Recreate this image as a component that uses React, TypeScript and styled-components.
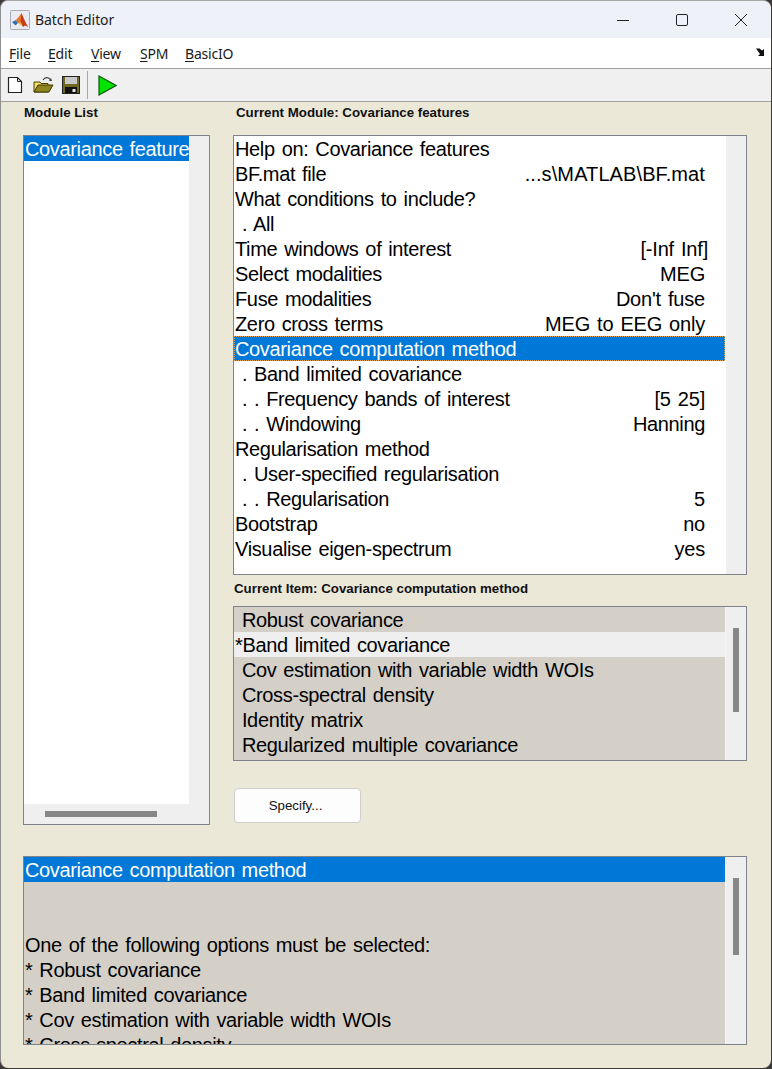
import React from "react"
import styled, { createGlobalStyle } from "styled-components"

const GlobalStyle = createGlobalStyle`
  html, body {
    margin: 0;
    padding: 0;
    background: #3b3a38;
  }
`

const Page = styled.div`
  width: 772px;
  height: 1069px;
  overflow: hidden;
`

const Window = styled.div`
  box-sizing: border-box;
  width: 771px;
  height: 1068px;
  display: flex;
  flex-direction: column;
  background: #ebe8d8;
  border-top: 1px solid #a9a9a9;
  border-left: 1px solid #8f8f8f;
  border-radius: 8px;
  overflow: hidden;
`

const TitleBar = styled.div`
  height: 37px;
  display: flex;
  align-items: center;
  background: #eff1f8;
  flex-shrink: 0;
`

const AppIcon = styled.svg`
  width: 20px;
  height: 20px;
  margin-left: 9px;
`

const Title = styled.span`
  margin-left: 5px;
  flex: 1;
  font: 14px "Noto Sans", sans-serif;
  letter-spacing: -0.1px;
  color: #1c1c1c;
`

const WindowButton = styled.svg`
  width: 14px;
  height: 14px;
  margin-right: 45px;
  &:last-child {
    margin-right: 23px;
  }
`

const MenuBar = styled.div`
  height: 30px;
  display: flex;
  align-items: center;
  padding-left: 8px;
  background: #fff;
  border-bottom: 1px solid #a0a0a0;
  flex-shrink: 0;
`

const MenuItem = styled.span<{ $width: number }>`
  width: ${p => p.$width}px;
  font: 14px "Noto Sans", sans-serif;
  letter-spacing: -0.2px;
  color: #1a1a1a;
  u {
    text-underline-offset: 2px;
  }
`

const MenuArrow = styled.svg`
  width: 10px;
  height: 8px;
  margin-left: auto;
  margin-right: 5px;
  margin-top: -2px;
`

const Toolbar = styled.div`
  height: 32px;
  display: flex;
  align-items: center;
  padding-left: 6px;
  background: #f0f0f0;
  border-bottom: 1px solid #a0a0a0;
  flex-shrink: 0;
`

const ToolIcon = styled.svg<{ $left: number }>`
  margin-left: ${p => p.$left}px;
  flex-shrink: 0;
`

const ToolSeparator = styled.div`
  width: 1px;
  height: 28px;
  margin-left: 7px;
  background: #a8a8a8;
`

const Content = styled.div`
  display: grid;
  grid-template-columns: 187px 514px;
  column-gap: 23px;
  row-gap: 31px;
  padding-left: 22px;
`

const Column = styled.div`
  display: flex;
  flex-direction: column;
`

const Label = styled.div<{ $height: number; $left: number; $top: number }>`
  box-sizing: border-box;
  height: ${p => p.$height}px;
  padding: ${p => p.$top}px 0 0 ${p => p.$left}px;
  font: bold 13.3px/20px "Liberation Sans", Arial, sans-serif;
  color: #111;
  white-space: nowrap;
`

const Panel = styled.div<{ $height: number }>`
  box-sizing: border-box;
  height: ${p => p.$height}px;
  display: flex;
  border: 1px solid #7f838c;
  background: #efefef;
  overflow: hidden;
`

const LeftPanel = styled(Panel)`
  flex-direction: column;
`

const LeftBody = styled.div`
  flex: 1;
  min-height: 0;
  display: flex;
`

const Rows = styled.div<{ $muted?: boolean }>`
  flex: 1;
  min-width: 0;
  overflow: hidden;
  background: ${p => (p.$muted ? "#d4d0c8" : "#fff")};
  border-right: 1px solid ${p => (p.$muted ? "#f6f6f6" : "#fff")};
  font: 20px/25px "Liberation Sans", Arial, sans-serif;
  letter-spacing: -0.35px;
  word-spacing: 1.7px;
  color: #000;
`

const LeftRows = styled(Rows)`
  border-right: none;
`

const Row = styled.div<{ $selected?: boolean; $focused?: boolean; $light?: boolean }>`
  box-sizing: border-box;
  height: 25px;
  padding: 1px 0 0 1px;
  display: flex;
  justify-content: space-between;
  white-space: pre;
  overflow: hidden;
  background: ${p => (p.$selected ? "#0078d7" : p.$light ? "#efefef" : "transparent")};
  color: ${p => (p.$selected ? "#fff" : "#000")};
  outline: ${p => (p.$focused ? "1px dotted #e0a050" : "none")};
  outline-offset: -1px;
`

const Value = styled.span<{ $inset?: number; $tracking?: number }>`
  padding-right: ${p => p.$inset ?? 20}px;
  letter-spacing: ${p => p.$tracking ?? -0.2}px;
`

const VerticalTrack = styled.div<{ $top?: number }>`
  width: 20px;
  flex-shrink: 0;
  box-sizing: border-box;
  padding: ${p => p.$top ?? 0}px 7px 0 7px;
`

const VerticalThumb = styled.div<{ $height: number }>`
  width: 6px;
  height: ${p => p.$height}px;
  background: #878787;
`

const HorizontalTrack = styled.div`
  height: 20px;
  flex-shrink: 0;
  box-sizing: border-box;
  padding: 7px 0 0 21px;
`

const HorizontalThumb = styled.div`
  width: 112px;
  height: 6px;
  background: #878787;
`

const SpecifyButton = styled.button`
  box-sizing: border-box;
  width: 127px;
  height: 35px;
  margin: 27px 0 0 1px;
  padding: 0 4px 0 0;
  background: #fdfdfd;
  border: 1px solid #cfcfcf;
  border-radius: 4px;
  font: 13.3px "Liberation Sans", Arial, sans-serif;
  color: #111;
`

const HelpPanel = styled(Panel)`
  grid-column: 1 / span 2;
`

const parameters: [string, string?, number?, number?][] = [
  ["Help on: Covariance features"],
  ["BF.mat file", "...s\\MATLAB\\BF.mat", 20, 0.1],
  ["What conditions to include?"],
  [" . All"],
  ["Time windows of interest", "[-Inf Inf]", 17],
  ["Select modalities", "MEG"],
  ["Fuse modalities", "Don't fuse"],
  ["Zero cross terms", "MEG to EEG only"],
  ["Covariance computation method"],
  [" . Band limited covariance"],
  [" . . Frequency bands of interest", "[5 25]", 20],
  [" . . Windowing", "Hanning", 20, -0.35],
  ["Regularisation method"],
  [" . User-specified regularisation"],
  [" . . Regularisation", "5"],
  ["Bootstrap", "no"],
  ["Visualise eigen-spectrum", "yes"]
]

const methods = [
  " Robust covariance",
  "*Band limited covariance",
  " Cov estimation with variable width WOIs",
  " Cross-spectral density",
  " Identity matrix",
  " Regularized multiple covariance"
]

const helpLines = [
  "",
  "",
  "One of the following options must be selected:",
  "* Robust covariance",
  "* Band limited covariance",
  "* Cov estimation with variable width WOIs",
  "* Cross-spectral density"
]

const menus: [string, string, number][] = [
  ["F", "ile", 39],
  ["E", "dit", 43],
  ["V", "iew", 49],
  ["S", "PM", 45],
  ["B", "asicIO", 60]
]

const MatlabIcon = () => (
  <AppIcon viewBox="0 0 20 20">
    <rect x="0.5" y="0.5" width="19" height="19" rx="1" fill="#e9ebf0" stroke="#a9abb0" />
    <path d="M2 12l4-2 2 3-2.500 2.500z" fill="#2f6fb5" />
    <path d="M6 10l3-3.500L11.500 3l2 9-3 1-2.500 0z" fill="#e8772a" />
    <path d="M11.500 3l2.500 6 4 8-3-1.500-2 1.500-2.500-5z" fill="#c63d1d" />
    <path d="M8 13l2.500-1 2 4.500z" fill="#f4b43a" />
  </AppIcon>
)

const App: React.FC = () => (
  <Page>
    <GlobalStyle />
    <Window>
      <TitleBar>
        <MatlabIcon />
        <Title>Batch Editor</Title>
        <WindowButton viewBox="0 0 14 14">
          <path d="M1 7.500h12" stroke="#222" strokeWidth="1" />
        </WindowButton>
        <WindowButton viewBox="0 0 14 14">
          <rect x="1.500" y="1.500" width="11" height="11" rx="1.500" fill="none" stroke="#222" />
        </WindowButton>
        <WindowButton viewBox="0 0 14 14">
          <path d="M1 1l12 12M13 1L1 13" stroke="#222" strokeWidth="1" />
        </WindowButton>
      </TitleBar>

      <MenuBar>
        {menus.map(([key, rest, width]) => (
          <MenuItem key={key} $width={width}>
            <u>{key}</u>
            {rest}
          </MenuItem>
        ))}
        <MenuArrow viewBox="0 0 10 8">
          <path d="M0 0.500h3.500l2.500 2 2-1.500v7H2l2-2z" fill="#111" />
        </MenuArrow>
      </MenuBar>

      <Toolbar>
        <ToolIcon $left={0} width="16" height="18" viewBox="0 0 16 18">
          <path d="M1.500 1.500h9l4 4v11h-13z" fill="#fff" stroke="#222" strokeWidth="1.200" />
          <path d="M10.500 1.500v4h4" fill="none" stroke="#222" />
        </ToolIcon>
        <ToolIcon $left={10} width="21" height="18" viewBox="0 0 21 18">
          <path d="M1 6h6l1 1.500h7V16H1z" fill="#f2dc6a" stroke="#4a4200" />
          <path d="M1 16l4-7h15l-4 7z" fill="#8f8420" stroke="#3d3800" />
          <path d="M10 4c2-3 5-3 7-1l1 2" fill="none" stroke="#444" strokeWidth="1.200" />
          <path d="M16 5l3 0-1-3z" fill="#444" />
        </ToolIcon>
        <ToolIcon $left={8} width="18" height="18" viewBox="0 0 18 18">
          <rect x="0.500" y="0.500" width="17" height="17" fill="#6e6820" stroke="#222" />
          <rect x="3" y="1" width="12" height="7" fill="#c9c9c9" />
          <rect x="3" y="11" width="12" height="6" fill="#111" />
          <rect x="10.500" y="13" width="3" height="3" fill="#e8e8e8" />
        </ToolIcon>
        <ToolSeparator />
        <ToolIcon $left={10} width="19" height="21" viewBox="0 0 19 21">
          <path d="M1 1l17 9.500L1 20z" fill="#00e400" stroke="#0a5a0a" strokeWidth="1.200" />
        </ToolIcon>
      </Toolbar>

      <Content>
        <Column>
          <Label $height={33} $left={1} $top={1}>
            Module List
          </Label>
          <LeftPanel $height={690}>
            <LeftBody>
              <LeftRows>
                <Row $selected>Covariance features</Row>
              </LeftRows>
              <VerticalTrack />
            </LeftBody>
            <HorizontalTrack>
              <HorizontalThumb />
            </HorizontalTrack>
          </LeftPanel>
        </Column>

        <Column>
          <Label $height={33} $left={3} $top={1}>
            Current Module: Covariance features
          </Label>
          <Panel $height={440}>
            <Rows>
              {parameters.map(([name, value, inset, tracking], i) => (
                <Row key={name} $selected={i === 8} $focused={i === 8}>
                  <span>{name}</span>
                  {value && (
                    <Value $inset={inset} $tracking={tracking}>
                      {value}
                    </Value>
                  )}
                </Row>
              ))}
            </Rows>
            <VerticalTrack />
          </Panel>

          <Label $height={31} $left={1} $top={4}>
            Current Item: Covariance computation method
          </Label>
          <Panel $height={155}>
            <Rows $muted>
              {methods.map((method, i) => (
                <Row key={method} $light={i === 1}>
                  {method}
                </Row>
              ))}
            </Rows>
            <VerticalTrack $top={21}>
              <VerticalThumb $height={84} />
            </VerticalTrack>
          </Panel>

          <SpecifyButton>Specify...</SpecifyButton>
        </Column>

        <HelpPanel $height={189}>
          <Rows $muted>
            <Row $selected>Covariance computation method</Row>
            {helpLines.map((line, i) => (
              <Row key={i}>{line}</Row>
            ))}
          </Rows>
          <VerticalTrack $top={21}>
            <VerticalThumb $height={77} />
          </VerticalTrack>
        </HelpPanel>
      </Content>
    </Window>
  </Page>
)

export default App
